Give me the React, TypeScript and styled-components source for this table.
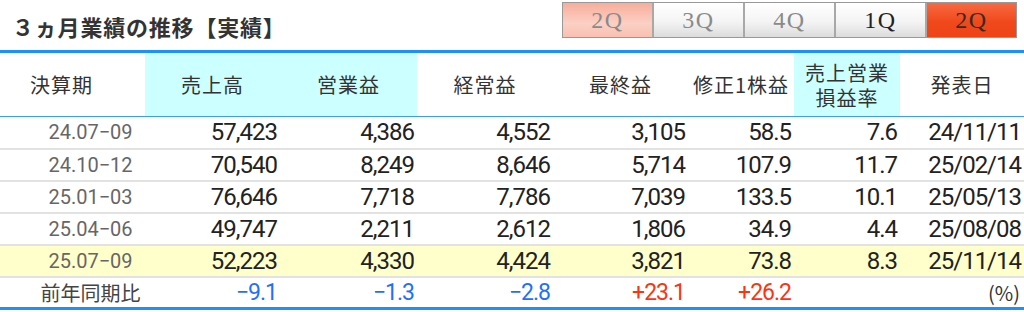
import * as React from 'react';
import styled, { createGlobalStyle, css } from 'styled-components';

const GlobalStyle = createGlobalStyle`
  body {
    margin: 0;
    background: #fff;
    font-family: 'Noto Sans CJK JP', 'Noto Sans', sans-serif;
  }
`;

type TabKind = 'past' | 'off' | 'on' | 'active';

const tabs: { label: string; kind: TabKind }[] = [
  { label: '2Q', kind: 'past' },
  { label: '3Q', kind: 'off' },
  { label: '4Q', kind: 'off' },
  { label: '1Q', kind: 'on' },
  { label: '2Q', kind: 'active' },
];

const rows = [
  { term: '24.07−09', v: ['57,423', '4,386', '4,552', '3,105', '58.5', '7.6', '24/11/11'] },
  { term: '24.10−12', v: ['70,540', '8,249', '8,646', '5,714', '107.9', '11.7', '25/02/14'] },
  { term: '25.01−03', v: ['76,646', '7,718', '7,786', '7,039', '133.5', '10.1', '25/05/13'] },
  { term: '25.04−06', v: ['49,747', '2,211', '2,612', '1,806', '34.9', '4.4', '25/08/08'] },
  { term: '25.07−09', v: ['52,223', '4,330', '4,424', '3,821', '73.8', '8.3', '25/11/14'], latest: true },
];

const compare = ['−9.1', '−1.3', '−2.8', '+23.1', '+26.2'];

const colWidths = [145, 135, 137, 136, 135, 106, 106, 124];

export default function App() {
  return (
    <Page>
      <GlobalStyle />
      <TopBar>
        <Title>３ヵ月業績の推移【実績】</Title>
        <TabStrip>
          {tabs.map((t, i) => (
            <Tab key={i} $kind={t.kind}>
              {t.label}
            </Tab>
          ))}
        </TabStrip>
      </TopBar>
      <Table>
        <colgroup>
          {colWidths.map((w, i) => (
            <col key={i} style={{ width: w }} />
          ))}
        </colgroup>
        <thead>
          <tr>
            <HeadCell $first>決算期</HeadCell>
            <HeadCell $tint>売上高</HeadCell>
            <HeadCell $tint>営業益</HeadCell>
            <HeadCell>経常益</HeadCell>
            <HeadCell>最終益</HeadCell>
            <HeadCell>修正1株益</HeadCell>
            <HeadCell $tint>
              <HeadLine>売上営業</HeadLine>
              <HeadLine>損益率</HeadLine>
            </HeadCell>
            <HeadCell>発表日</HeadCell>
          </tr>
        </thead>
        <tbody>
          {rows.map(r => (
            <DataRow key={r.term} $latest={r.latest}>
              <TermCell>{r.term}</TermCell>
              {r.v.map((x, i) => (
                <NumCell key={i}>{x}</NumCell>
              ))}
            </DataRow>
          ))}
          <CompareRow>
            <CompareLabel>前年同期比</CompareLabel>
            {compare.map((x, i) => (
              <CompareCell key={i} $up={x.startsWith('+')}>
                {x}
              </CompareCell>
            ))}
            <NumCell />
            <UnitCell>(%)</UnitCell>
          </CompareRow>
        </tbody>
      </Table>
    </Page>
  );
}

const Page = styled.div`
  width: 1024px;
  height: 312px;
  overflow: hidden;
`;

const TopBar = styled.div`
  display: flex;
  justify-content: space-between;
  align-items: flex-start;
  height: 50px;
`;

const Title = styled.h2`
  margin: 0;
  padding: 12px 0 0 12px;
  font-size: 22px;
  line-height: 28px;
  font-weight: 700;
  color: #333;
  letter-spacing: 0.8px;
`;

const TabStrip = styled.div`
  display: flex;
  margin: 2px 7px 0 0;
  border: 1px solid #999;
`;

const tabLook = {
  past: css`
    background: linear-gradient(#f7ad9b, #fbd0c5 60%, #f9c0b2);
    color: #8a8a8a;
  `,
  off: css`
    background: linear-gradient(#ffffff, #f4f4f4 55%, #dcdcdc);
    color: #8a8a8a;
  `,
  on: css`
    background: linear-gradient(#ffffff, #f4f4f4 55%, #dcdcdc);
    color: #222;
  `,
  active: css`
    background: linear-gradient(#f86a42, #f0491c 55%, #ee4317);
    color: #3a2a20;
  `,
};

const Tab = styled.div<{ $kind: TabKind }>`
  width: 89px;
  height: 34px;
  display: flex;
  align-items: center;
  justify-content: center;
  font-family: 'Liberation Serif', 'DejaVu Serif', serif;
  font-size: 24px;
  letter-spacing: 1.5px;
  & + & {
    border-left: 2px solid #a8a8a8;
  }
  ${p => tabLook[p.$kind]}
`;

const Table = styled.table`
  width: 1024px;
  table-layout: fixed;
  border-collapse: collapse;
  border-top: 3px solid #1e8fff;
  border-bottom: 3px solid #1e8fff;
`;

const HeadCell = styled.th<{ $tint?: boolean; $first?: boolean }>`
  height: 63px;
  padding: 0;
  padding-right: ${p => (p.$first ? '22px' : '0')};
  border-bottom: 1px solid #3b9bff;
  background: ${p => (p.$tint ? '#ccffff' : '#fff')};
  color: #333;
  font-size: 20px;
  font-weight: 400;
  letter-spacing: 1px;
  line-height: 24px;
  text-align: center;
  vertical-align: middle;
`;

const HeadLine = styled.div`
  height: 25px;
  line-height: 25px;
`;

const DataRow = styled.tr<{ $latest?: boolean }>`
  height: 32px;
  background: ${p => (p.$latest ? '#ffffcc' : '#fff')};
  border-bottom: 2px solid #e2e2e2;
`;

const TermCell = styled.td`
  padding: 0 0 0 36px;
  text-align: center;
  font-family: Roboto, 'Liberation Sans', sans-serif;
  font-size: 20px;
  color: #666;
`;

const NumCell = styled.td`
  padding: 0 3px 0 0;
  text-align: right;
  font-family: Roboto, 'Liberation Sans', sans-serif;
  font-size: 24px;
  letter-spacing: -1px;
  color: #222;
`;

const CompareRow = styled.tr`
  height: 31px;
`;

const CompareLabel = styled.td`
  padding: 0 0 0 36px;
  text-align: center;
  font-size: 20px;
  color: #444;
`;

const CompareCell = styled(NumCell)<{ $up: boolean }>`
  font-size: 23px;
  color: ${p => (p.$up ? '#ff3311' : '#1f70ff')};
`;

const UnitCell = styled.td`
  padding: 0 4px 0 0;
  text-align: right;
  font-size: 20px;
  color: #333;
`;
